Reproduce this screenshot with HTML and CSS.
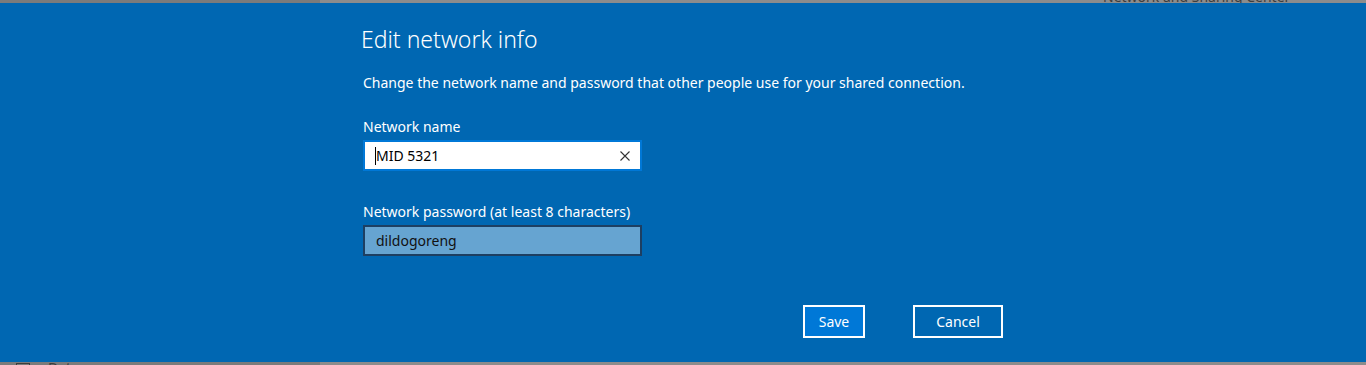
FILE: index.html
```html
<!DOCTYPE html>
<html lang="en">
<head>
<meta charset="utf-8">
<title>Edit network info</title>
<link rel="stylesheet" href="styles.css">
</head>
<body>
<div class="page">
  <div class="strip strip-top">
    <div class="strip-dark"></div>
    <div class="strip-light"><span class="strip-text top-text">Network and Sharing Center</span></div>
  </div>
  <div class="dialog">
    <h1 class="title">Edit network info</h1>
    <p class="desc">Change the network name and password that other people use for your shared connection.</p>
    <div class="field field-name">
      <label class="label">Network name</label>
      <div class="input input-focus">
        <span class="caret"></span>
        <span class="value">MID 5321</span>
        <svg class="clear" width="10" height="10" viewBox="0 0 10 10"><path d="M0.5 0.5 L9.5 9.5 M9.5 0.5 L0.5 9.5" stroke="#333" stroke-width="1.1" fill="none"/></svg>
      </div>
    </div>
    <div class="field field-pass">
      <label class="label">Network password (at least 8 characters)</label>
      <div class="input input-pass">
        <span class="value">dildogoreng</span>
      </div>
    </div>
    <div class="actions">
      <button class="btn btn-primary">Save</button>
      <button class="btn">Cancel</button>
    </div>
  </div>
  <div class="strip strip-bottom">
    <div class="strip-dark"><span class="strip-text bottom-icon"></span><span class="strip-text bottom-text">Data usage</span></div>
    <div class="strip-light"></div>
  </div>
</div>
</body>
</html>
```
FILE: styles.css
```css
* { box-sizing: border-box; }
html, body { margin: 0; padding: 0; }
body {
  width: 1366px;
  height: 365px;
  overflow: hidden;
  font-family: "Noto Sans", "Open Sans", sans-serif;
  background: #0067b2;
}
.page { display: flex; flex-direction: column; height: 365px; }
.strip { display: flex; height: 3px; overflow: hidden; position: relative; }
.strip-dark { width: 320px; background: #7b7b7b; position: relative; }
.strip-light { flex: 1; background: #8c8c8c; position: relative; }
.strip-text {
  position: absolute;
  font-size: 14px;
  color: #3d3d3d;
  white-space: nowrap;
  line-height: 20px;
}
.top-text { left: 783px; top: -13px; }
.bottom-text { left: 48px; top: -4px; }
.bottom-icon {
  left: 16px; top: 1px; width: 14px; height: 10px;
  border: 1px solid #3d3d3d;
}
.dialog {
  flex: 1;
  background: #0067b2;
  padding: 21px 0 0 361px;
  color: #fff;
  display: flex;
  flex-direction: column;
}
.title {
  margin: 0;
  font-weight: 300;
  font-size: 23px;
  line-height: 30px;
}
.desc {
  margin: 19px 0 0 2px;
  font-size: 14px;
  line-height: 20px;
}
.field { display: flex; flex-direction: column; margin-left: 2px; }
.field-name { margin-top: 24px; }
.field-pass { margin-top: 31px; }
.label { font-size: 14px; line-height: 20px; }
.input {
  width: 279px;
  height: 31px;
  margin-top: 3px;
  display: flex;
  align-items: center;
  padding: 0 10px 0 11px;
  font-size: 14px;
  position: relative;
}
.input-focus { background: #fff; border: 2px solid #0078d7; color: #000; }
.input-pass { background: #66a4d1; border: 2px solid #1d3f62; color: #111; }
.caret { width: 1px; height: 18px; background: #000; margin-left: -1px; }
.value { flex: 1; }
.clear { flex: none; }
.actions {
  display: flex;
  gap: 48px;
  margin-top: 49px;
  margin-left: 442px;
}
.btn {
  font-family: inherit;
  font-size: 14px;
  color: #fff;
  background: transparent;
  border: 2px solid #fff;
  height: 33px;
  padding: 0;
  width: 90px;
}
.btn-primary { background: #0078d7; width: 62px; }
```
